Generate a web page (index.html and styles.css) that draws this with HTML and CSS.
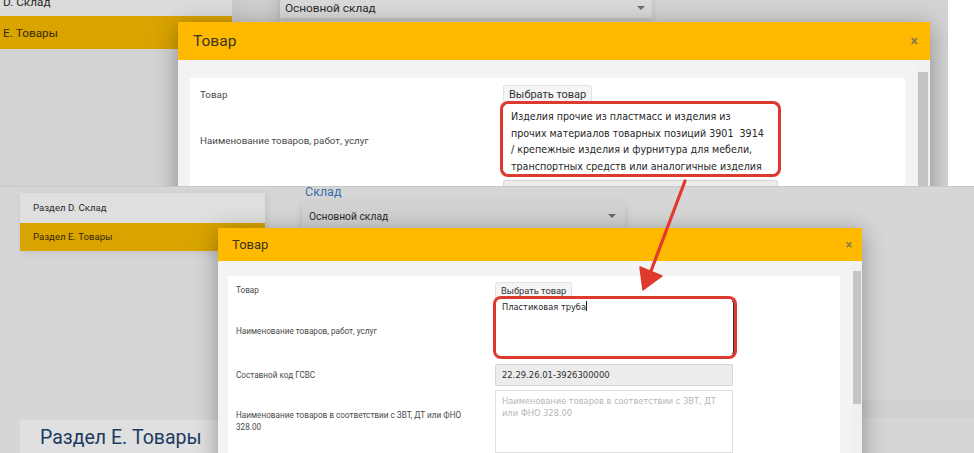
FILE: index.html
```html
<!DOCTYPE html>
<html lang="ru">
<head>
<meta charset="utf-8">
<link rel="stylesheet" href="styles.css">
</head>
<body>
<div class="canvas">
  <!-- top screenshot -->
  <div class="shot shot-a">
    <div class="side side-a">
      <div class="side-row">D. Склад</div>
      <div class="side-row active">E. Товары</div>
    </div>
    <div class="shade-a"></div>
    <div class="sel sel-a"><span>Основной склад</span><i class="tri"></i></div>

    <div class="modal modal-a">
      <div class="m-head"><span class="m-title">Товар</span><span class="m-x">×</span></div>
      <div class="m-body">
        <div class="card">
          <div class="lbl">Товар</div>
          <div class="ctl"><span class="btn">Выбрать товар</span></div>
          <div class="lbl">Наименование товаров, работ, услуг</div>
          <div class="ctl"><div class="ta hl">Изделия прочие из пластмасс и изделия из<br>прочих материалов товарных позиций 3901&nbsp; 3914<br>/ крепежные изделия и фурнитура для мебели,<br>транспортных средств или аналогичные изделия</div></div>
          <div class="lbl"></div>
          <div class="ctl"><div class="inp"></div></div>
        </div>
        <div class="sbar"><span class="sb-up"></span><span class="sb-thumb"></span></div>
      </div>
    </div>
  </div>

  <!-- bottom screenshot -->
  <div class="shot shot-b">
    <div class="side side-b">
      <div class="side-row">Раздел D. Склад</div>
      <div class="side-row active">Раздел E. Товары</div>
    </div>
    <div class="col-b">
      <div class="fld-title">Склад</div>
      <div class="sel sel-b"><span>Основной склад</span><i class="tri"></i></div>
    </div>
    <div class="band-b"></div>
    <div class="sec-head">Раздел E. Товары</div>

    <div class="modal modal-b">
      <div class="m-head"><span class="m-title">Товар</span><span class="m-x">×</span></div>
      <div class="m-body">
        <div class="card">
          <div class="lbl">Товар</div>
          <div class="ctl"><span class="btn">Выбрать товар</span></div>
          <div class="lbl">Наименование товаров, работ, услуг</div>
          <div class="ctl"><div class="ta hl">Пластиковая труба<span class="caret"></span></div></div>
          <div class="lbl">Составной код ГСВС</div>
          <div class="ctl"><div class="inp ro">22.29.26.01-3926300000</div></div>
          <div class="lbl wrap">Наименование товаров в соответствии с ЗВТ, ДТ или ФНО 328.00</div>
          <div class="ctl"><div class="ta ph">Наименование товаров в соответствии с ЗВТ, ДТ или ФНО 328.00</div></div>
        </div>
        <div class="sbar"><span class="sb-up"></span><span class="sb-thumb"></span></div>
      </div>
    </div>
  </div>

  <svg class="arrow" width="974" height="453" viewBox="0 0 974 453">
    <line x1="685" y1="181" x2="651" y2="271" stroke="#e0392d" stroke-width="3.2" stroke-linecap="round"/>
    <polygon points="643,290 640,267 662,276" fill="#e0392d" stroke="#e0392d" stroke-width="1.5" stroke-linejoin="round"/>
  </svg>
</div>
</body>
</html>
```

FILE: styles.css
```css
* { box-sizing: border-box; }
html, body { margin: 0; padding: 0; }
body { background: #fff; font-family: Roboto, "Liberation Sans", sans-serif; }

.canvas { position: relative; width: 974px; height: 453px; overflow: hidden; background: #fff; }

.shot { position: absolute; left: 0; overflow: hidden; }

/* ---------- top screenshot ---------- */
.shot-a { top: 0; width: 948px; height: 188px; background: #d3d3d3; display: flex; align-items: flex-start; }
.side { display: flex; flex-direction: column; }
.side-a { width: 232px; margin-top: -12px; flex: none; }
.side-a .side-row { height: 28px; line-height: 28px; padding-left: 3px; font-size: 11.8px; color: #2a2a2a; background: #dcdcdc; }
.side-a .side-row.active { height: 33px; line-height: 34px; background: #d9a300; color: #3a2c00; }
.shade-a { width: 48px; height: 188px; flex: none; background: linear-gradient(90deg, #c9c9c9, #d0d0d0 60%, #c6c6c6); }
.sel { position: relative; display: flex; align-items: center; justify-content: space-between; background: #d9d9d9; color: #2b2b2b; }
.sel-a { width: 372px; height: 20px; margin-top: -2px; padding: 0 7px 0 5px; font-size: 11.8px; box-shadow: 0 2px 6px rgba(0,0,0,.12); }
.tri { display: block; width: 0; height: 0; border-left: 4px solid transparent; border-right: 4px solid transparent; border-top: 4px solid #6c6c6c; }

.modal { position: absolute; background: #f3f3f3; box-shadow: 0 4px 22px rgba(0,0,0,.35); }
.m-head { display: flex; align-items: center; justify-content: space-between; background: #ffba00; color: #3c3420; }
.m-x { color: #8a7a50; font-weight: bold; }
.m-body { display: flex; align-items: flex-start; justify-content: space-between; }
.card { background: #fff; display: grid; align-items: start; }
.lbl { color: #4a4a4a; align-self: center; }
.btn { display: inline-block; background: #f5f5f5; border: 1px solid #e3e3e3; border-radius: 2px; color: #333; }
.ta { background: #fff; border: 1px solid #d8d8d8; font-family: "DejaVu Sans Condensed", "DejaVu Sans", Verdana, sans-serif; font-stretch: condensed; color: #262626; }
.hl { border-radius: 5px; box-shadow: 0 0 0 3px #dc3a2e; border-color: #fff; }
.inp { background: #ececec; border: 1px solid #d6d6d6; border-radius: 2px; font-family: "DejaVu Sans Condensed", "DejaVu Sans", Verdana, sans-serif; font-stretch: condensed; color: #2e2e2e; }
.sbar { display: flex; flex-direction: column; align-items: stretch; background: #f0f0f0; }
.sb-up { height: 10px; display: flex; }
.sb-thumb { background: #c4c4c4; }

.modal-a { left: 178px; top: 22px; width: 752px; height: 200px; }
.modal-a .m-head { height: 38px; padding: 0 12px 0 15px; }
.modal-a .m-title { font-size: 15.5px; }
.modal-a .m-x { font-size: 14px; }
.modal-a .m-body { padding: 18px 1px 0 12px; }
.modal-a .card { width: 715px; height: 130px; grid-template-columns: 300px 281px; grid-template-rows: 21px 73px 26px; align-content: start; padding: 5px 10px 0; }
.modal-a .lbl { font-size: 9.8px; }
.modal-a .lbl:first-child { padding-top: 1px; }
.modal-a .btn { margin-left: 3px; padding: 1px 5px; line-height: 15px; font-size: 11px; }
.modal-a .ta { height: 70px; margin: 0 3px; padding: 3px 4px 0 7px; font-size: 10.6px; line-height: 16.5px; white-space: nowrap; overflow: hidden; }
.modal-a .inp { height: 24px; margin: 3px 3px 0; }
.modal-a .sbar { width: 12px; height: 140px; margin-top: -16px; }
.modal-a .sb-thumb { height: 120px; margin: 0 1px; }

/* ---------- bottom screenshot ---------- */
.shot-b { top: 187px; width: 974px; height: 266px; background: #d6d6d6; box-shadow: 0 -1px 0 #c8c8c8; }
.side-b { position: absolute; left: 20px; top: 6px; width: 245px; box-shadow: 2px 2px 8px rgba(0,0,0,.08); }
.side-b .side-row { height: 30px; line-height: 30px; padding-left: 13px; font-size: 9.6px; color: #2c2c2c; background: #dfdfdf; }
.side-b .side-row.active { height: 28px; line-height: 28px; background: #d9a400; color: #352800; }
.col-b { position: absolute; left: 302px; top: -4px; display: flex; flex-direction: column; gap: 3px; }
.fld-title { font-size: 12.5px; color: #3b6ea8; padding-left: 3px; height: 17px; line-height: 17px; }
.sel-b { width: 323px; height: 26px; padding: 0 9px 0 7px; font-size: 10.3px; background: #d2d2d2; box-shadow: 0 2px 8px rgba(0,0,0,.15); }
.band-b { position: absolute; left: 860px; top: 213px; width: 114px; height: 18px; background: #d0d0d0; }
.sec-head { position: absolute; left: 20px; top: 233px; width: 500px; height: 40px; padding: 6px 0 0 20px; background: #e0e0e0; font-size: 19.5px; color: #1c3b60; }

.modal-b { left: 218px; top: 41px; width: 644px; height: 240px; }
.modal-b .m-head { height: 33px; padding: 0 10px 0 14px; }
.modal-b .m-title { font-size: 13px; }
.modal-b .m-x { font-size: 12px; }
.modal-b .m-body { padding: 15px 0 0 10px; }
.modal-b .card { width: 612px; height: 200px; grid-template-columns: 259px 242px; grid-template-rows: 20px 63px 26px 66px; align-content: start; padding: 3px 8px 0; }
.modal-b .lbl { font-size: 8.2px; line-height: 12px; }
.modal-b .lbl:first-child { align-self: start; padding-top: 5px; }
.modal-b .lbl.wrap { padding-right: 20px; }
.modal-b .btn { padding: 1px 5px; font-size: 9.3px; line-height: 13px; }
.modal-b .ta { height: 57px; margin: 0 1px; padding: 1px 5px; font-size: 9.2px; line-height: 12px; }
.modal-b .ta.hl { width: 238px; border-right: 1px solid #333; }
.modal-b .ta.ph { width: 238px; height: 63px; margin: 2px 0 0; padding: 4px 6px; color: #b6b6b6; border-color: #dedede; }
.modal-b .inp { width: 238px; height: 22px; margin: 2px 0 0; padding: 0 6px; line-height: 20px; font-size: 9.4px; }
.caret { display: inline-block; width: 1px; height: 10px; background: #222; vertical-align: -1px; }
.modal-b .sbar { width: 10px; height: 190px; margin-top: -12px; }
.modal-b .sb-up { height: 7px; }
.modal-b .sb-thumb { height: 133px; margin: 0 1px; }

.arrow { position: absolute; left: 0; top: 0; pointer-events: none; }
```
